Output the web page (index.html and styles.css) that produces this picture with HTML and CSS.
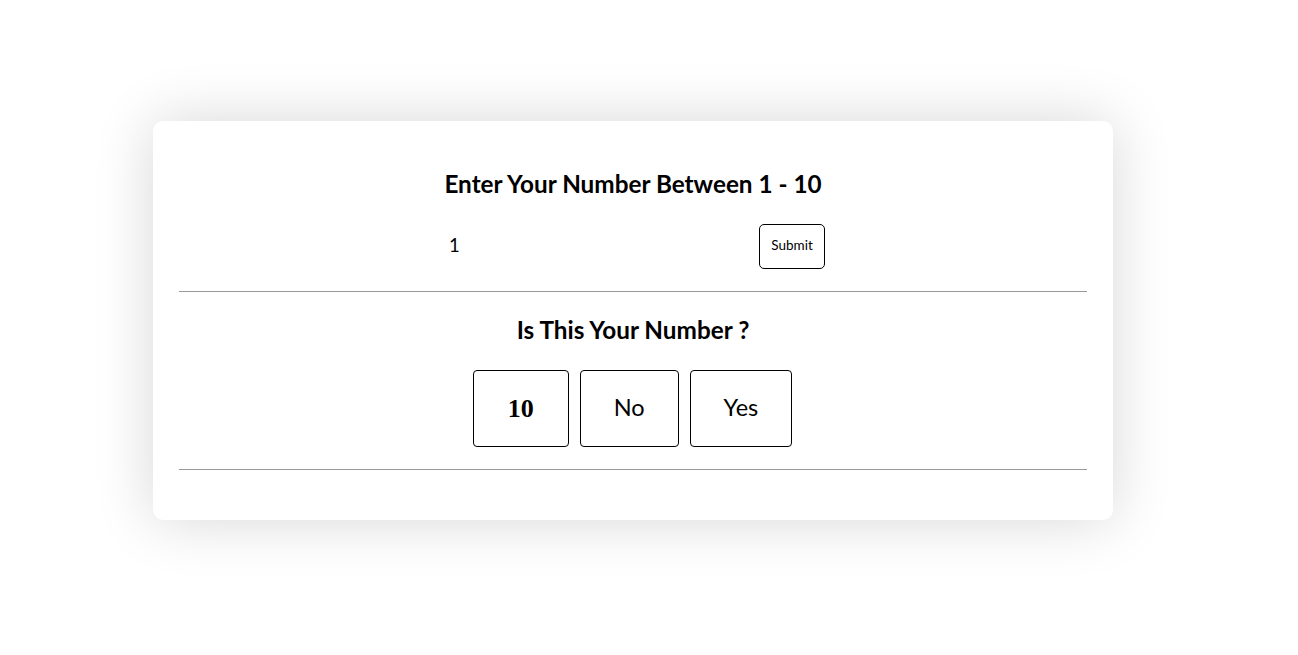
FILE: index.html
```html
<!DOCTYPE html>
<html>
<head>
<meta charset="utf-8">
<link rel="stylesheet" href="styles.css">
</head>
<body>
<div class="card">
  <h2 class="title">Enter Your Number Between 1 - 10</h2>
  <div class="entry">
    <input class="num-input" type="text" value="1">
    <button class="submit">Submit</button>
  </div>
  <hr class="rule">
  <h2 class="title title-2">Is This Your Number ?</h2>
  <div class="answers">
    <div class="box guess">10</div>
    <button class="box">No</button>
    <button class="box">Yes</button>
  </div>
  <hr class="rule rule-2">
</div>
</body>
</html>
```
FILE: styles.css
```css
html, body {
  margin: 0;
  background: #fff;
}
body {
  padding: 121px 0 0 153px;
  height: 655px;
  box-sizing: border-box;
  font-family: Lato, "Open Sans", sans-serif;
  color: #000;
}
.card {
  width: 960px;
  height: 399px;
  box-sizing: border-box;
  background: #fff;
  border-radius: 10px;
  box-shadow: 0 0 60px rgba(0, 0, 0, 0.16);
  padding: 48px 26px 0 26px;
}
.title {
  margin: 0;
  font-size: 24.3px;
  line-height: 29px;
  font-weight: 700;
  text-align: center;
}
.title-2 {
  margin-top: 23px;
}
.entry {
  margin-top: 26px;
  display: flex;
  justify-content: center;
  align-items: center;
  gap: 10px;
}
.num-input {
  width: 308px;
  height: 45px;
  box-sizing: border-box;
  border: none;
  outline: none;
  padding: 0 8px 3px 8px;
  font-family: Lato, sans-serif;
  font-size: 18.5px;
  color: #000;
  background: transparent;
}
.submit {
  width: 66px;
  height: 45px;
  box-sizing: border-box;
  border: 1px solid #000;
  border-radius: 5px;
  background: #fff;
  font-family: Lato, sans-serif;
  font-size: 13.5px;
  color: #000;
  padding: 0 0 3px 0;
}
.rule {
  margin: 22px 0 0 0;
  border: none;
  border-top: 1px solid #999;
  height: 0;
}
.rule-2 {
  margin-top: 22px;
}
.answers {
  margin-top: 26px;
  display: flex;
  justify-content: center;
  gap: 11px;
  padding-right: 1px;
}
.box {
  height: 77px;
  box-sizing: border-box;
  padding: 0 33px 3px 33px;
  border: 1px solid #000;
  border-radius: 4px;
  background: #fff;
  font-family: Lato, sans-serif;
  font-size: 23.5px;
  color: #000;
  display: flex;
  align-items: center;
  justify-content: center;
}
.guess {
  font-family: "Liberation Serif", "Times New Roman", serif;
  font-weight: 700;
  font-size: 26px;
  padding: 0 34px;
}
```
